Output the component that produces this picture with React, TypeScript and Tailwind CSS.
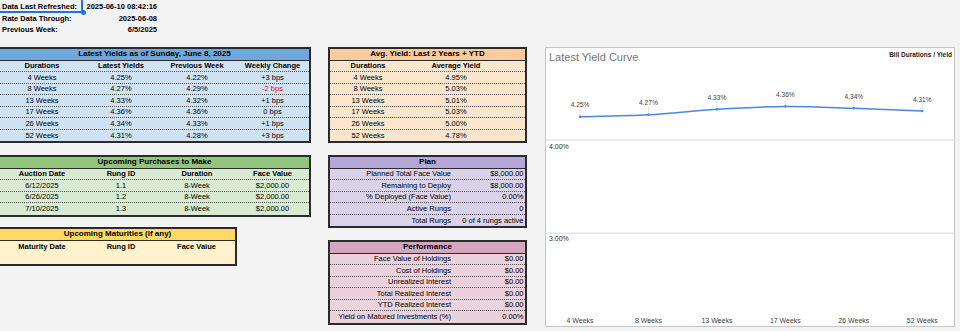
import React from 'react';

const yields = [
  ['4 Weeks', '4.25%', '4.22%', '+3 bps'],
  ['8 Weeks', '4.27%', '4.29%', '-2 bps'],
  ['13 Weeks', '4.33%', '4.32%', '+1 bps'],
  ['17 Weeks', '4.36%', '4.36%', '0 bps'],
  ['26 Weeks', '4.34%', '4.33%', '+1 bps'],
  ['52 Weeks', '4.31%', '4.28%', '+3 bps'],
];

const averages = [
  ['4 Weeks', '4.95%'],
  ['8 Weeks', '5.03%'],
  ['13 Weeks', '5.01%'],
  ['17 Weeks', '5.03%'],
  ['26 Weeks', '5.00%'],
  ['52 Weeks', '4.78%'],
];

const purchases = [
  ['6/12/2025', '1.1', '8-Week', '$2,000.00'],
  ['6/26/2025', '1.2', '8-Week', '$2,000.00'],
  ['7/10/2025', '1.3', '8-Week', '$2,000.00'],
];

const plan = [
  ['Planned Total Face Value', '$8,000.00'],
  ['Remaining to Deploy', '$8,000.00'],
  ['% Deployed (Face Value)', '0.00%'],
  ['Active Rungs', '0'],
  ['Total Rungs', '0 of 4 rungs active'],
];

const performance = [
  ['Face Value of Holdings', '$0.00'],
  ['Cost of Holdings', '$0.00'],
  ['Unrealized Interest', '$0.00'],
  ['Total Realized Interest', '$0.00'],
  ['YTD Realized Interest', '$0.00'],
  ['Yield on Matured Investments (%)', '0.00%'],
];

const Title = ({ bg, children }: { bg: string; children: React.ReactNode }) => (
  <div className={`h-[11.5px] flex items-center justify-center border-b border-[#2b2b2b] text-[8px] font-bold leading-none ${bg}`}>
    {children}
  </div>
);

const Row = ({ cols, last, bold, children }: { cols: string; last?: boolean; bold?: boolean; children: React.ReactNode }) => (
  <div
    className={`grid ${cols} h-[11.5px] items-center text-[7.5px] leading-none ${last ? '' : 'border-b border-dotted border-[#555]'} ${bold ? 'font-bold' : ''}`}
  >
    {children}
  </div>
);

const Box = ({ bg, className, children }: { bg: string; className?: string; children: React.ReactNode }) => (
  <div className={`border-2 border-[#2b2b2b] ${bg} ${className ?? ''}`}>{children}</div>
);

const YieldChart = () => {
  const labels = ['4 Weeks', '8 Weeks', '13 Weeks', '17 Weeks', '26 Weeks', '52 Weeks'];
  const vals = [4.25, 4.27, 4.33, 4.36, 4.34, 4.31];
  const px = (i: number) => 34 + 68.46 * i;
  const py = (v: number) => 92 - (v - 4) * 93.3;
  const pts = vals.map((v, i) => [px(i), py(v)]);

  // catmull-rom -> bezier for the smoothed line
  let d = `M${pts[0][0]},${pts[0][1]}`;
  for (let i = 0; i < pts.length - 1; i++) {
    const p0 = pts[i - 1] || pts[i];
    const p1 = pts[i];
    const p2 = pts[i + 1];
    const p3 = pts[i + 2] || p2;
    const c1 = [p1[0] + (p2[0] - p0[0]) / 6, p1[1] + (p2[1] - p0[1]) / 6];
    const c2 = [p2[0] - (p3[0] - p1[0]) / 6, p2[1] - (p3[1] - p1[1]) / 6];
    d += ` C${c1[0]},${c1[1]} ${c2[0]},${c2[1]} ${p2[0]},${p2[1]}`;
  }

  return (
    <div className="ml-[18px] w-[410px] h-[280px] bg-white border border-[#c6c6c6]">
      <svg width="408" height="278" viewBox="0 0 408 278">
        <line x1="0" y1="92" x2="408" y2="92" stroke="#e4e4e4" strokeWidth="1.6" />
        <line x1="0" y1="185.3" x2="408" y2="185.3" stroke="#e4e4e4" strokeWidth="1.6" />

        <text x="3" y="13" fontSize="11" fill="#757575">Latest Yield Curve</text>
        <text x="406" y="8.5" fontSize="6.5" fontWeight="600" fill="#222" textAnchor="end">Bill Durations / Yield</text>

        <text x="3" y="100.5" fontSize="7" fill="#333">4.00%</text>
        <text x="3" y="192.5" fontSize="7" fill="#333">3.00%</text>

        {pts.map(([x, y], i) => (
          <g key={i}>
            <line x1={x} y1={y - 8} x2={x} y2={y} stroke="#e2e2e2" strokeWidth="1" />
            <text x={x} y={y - 9.4} fontSize="6.6" fill="#444" textAnchor="middle">
              {vals[i].toFixed(2)}%
            </text>
          </g>
        ))}

        <path d={d} fill="none" stroke="#4a86e8" strokeWidth="1.5" />
        {pts.map(([x, y], i) => (
          <circle key={i} cx={x} cy={y} r="1.2" fill="#4a86e8" />
        ))}

        {labels.map((l, i) => (
          <text key={l} x={px(i)} y="274.5" fontSize="7" fill="#444" textAnchor="middle">
            {l}
          </text>
        ))}
      </svg>
    </div>
  );
};

export default function App() {
  const cols4 = 'grid-cols-[84px_74px_78px_73px]';
  const cols3 = 'grid-cols-[84px_74px_77px]';
  const colsAvg = 'grid-cols-[76px_100px_19px]';
  const colsKV = 'grid-cols-[123px_72px]';

  return (
    <div className="w-[960px] h-[331px] overflow-hidden bg-[#f3f3f3] text-black font-['Liberation_Sans',Arial,sans-serif]">
      {/* Refresh info */}
      <div className="w-[158px] h-[47px] text-[7.5px] font-bold leading-none">
        <div className="grid grid-cols-[84px_74px] h-[12.5px] items-center">
          <div className="relative h-full flex items-center pl-[2px]">
            Data Last Refreshed:
            <span className="absolute -top-[2px] -left-[2px] right-[1px] bottom-0 border-2 border-[#1a73e8]" />
            <span className="absolute -right-[2px] -bottom-[2.5px] w-[5px] h-[5px] rounded-full bg-[#1a73e8]" />
          </div>
          <div className="text-right pr-[1px]">2025-06-10 08:42:16</div>
        </div>
        <div className="grid grid-cols-[84px_74px] h-[11.5px] items-center">
          <div className="pl-[2px]">Rate Data Through:</div>
          <div className="text-right pr-[1px]">2025-06-08</div>
        </div>
        <div className="grid grid-cols-[84px_74px] h-[11.5px] items-center">
          <div className="pl-[2px]">Previous Week:</div>
          <div className="text-right pr-[1px]">6/5/2025</div>
        </div>
      </div>

      <div className="flex items-start">
        {/* Left column */}
        <div className="-ml-[2px] w-[313px] shrink-0">
          <Box bg="bg-[#cfe2f3]">
            <Title bg="bg-[#6fa8dc]">Latest Yields as of Sunday, June 8, 2025</Title>
            <Row cols={cols4} bold>
              <div className="text-center">Durations</div>
              <div className="text-center">Latest Yields</div>
              <div className="text-center">Previous Week</div>
              <div className="text-center">Weekly Change</div>
            </Row>
            {yields.map((r, i) => (
              <Row key={r[0]} cols={cols4} last={i === yields.length - 1}>
                <div className="text-center">{r[0]}</div>
                <div className="text-center">{r[1]}</div>
                <div className="text-center">{r[2]}</div>
                <div className={`text-center ${r[3].startsWith('-') ? 'text-[#ff0000]' : ''}`}>{r[3]}</div>
              </Row>
            ))}
          </Box>

          <Box bg="bg-[#d9ead3]" className="mt-[12px]">
            <Title bg="bg-[#93c47d]">Upcoming Purchases to Make</Title>
            <Row cols={cols4} bold>
              <div className="text-center">Auction Date</div>
              <div className="text-center">Rung ID</div>
              <div className="text-center">Duration</div>
              <div className="text-center">Face Value</div>
            </Row>
            {purchases.map((r, i) => (
              <Row key={r[0]} cols={cols4} last={i === purchases.length - 1}>
                {r.map((c, j) => (
                  <div key={j} className="text-center">{c}</div>
                ))}
              </Row>
            ))}
          </Box>

          <Box bg="bg-[#fff2cc]" className="mt-[10.5px] w-[239px]">
            <Title bg="bg-[#ffd966]">Upcoming Maturities (if any)</Title>
            <Row cols={cols3} bold last>
              <div className="text-center">Maturity Date</div>
              <div className="text-center">Rung ID</div>
              <div className="text-center">Face Value</div>
            </Row>
            <div className="h-[11.5px]" />
          </Box>
        </div>

        {/* Middle column */}
        <div className="ml-[17px] w-[199px] shrink-0">
          <Box bg="bg-[#fce5cd]">
            <Title bg="bg-[#f9cb9c]">Avg. Yield: Last 2 Years + YTD</Title>
            <Row cols={colsAvg} bold>
              <div className="text-center">Durations</div>
              <div className="text-center">Average Yield</div>
              <div />
            </Row>
            {averages.map((r, i) => (
              <Row key={r[0]} cols={colsAvg} last={i === averages.length - 1}>
                <div className="text-center">{r[0]}</div>
                <div className="text-center">{r[1]}</div>
                <div />
              </Row>
            ))}
          </Box>

          <Box bg="bg-[#d9d2e9]" className="mt-[12px]">
            <Title bg="bg-[#b4a7d6]">Plan</Title>
            {plan.map((r, i) => (
              <Row key={r[0]} cols={colsKV} last={i === plan.length - 1}>
                <div className="text-right pr-[2px]">{r[0]}</div>
                <div className="text-right pr-[1.5px] whitespace-nowrap">{r[1]}</div>
              </Row>
            ))}
          </Box>

          <Box bg="bg-[#ead1dc]" className="mt-[12px]">
            <Title bg="bg-[#d5a6bd]">Performance</Title>
            {performance.map((r, i) => (
              <Row key={r[0]} cols={colsKV} last={i === performance.length - 1}>
                <div className="text-right pr-[2px] whitespace-nowrap">{r[0]}</div>
                <div className="text-right pr-[1.5px]">{r[1]}</div>
              </Row>
            ))}
          </Box>
        </div>

        <YieldChart />
      </div>
    </div>
  );
}
